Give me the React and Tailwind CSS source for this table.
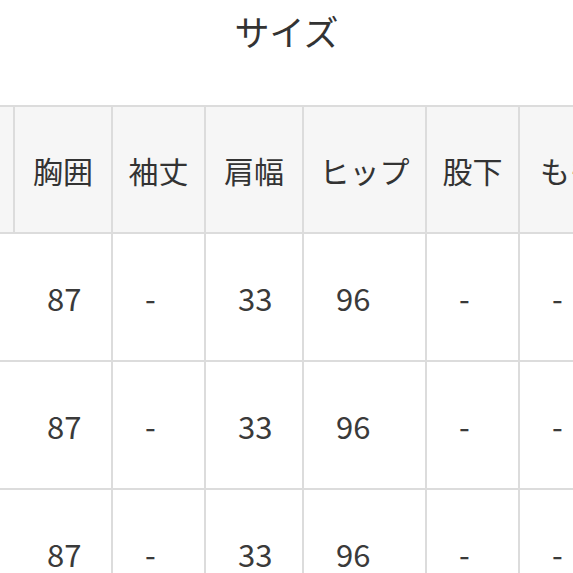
import React from "react";

const headers = ["", "胸囲", "袖丈", "肩幅", "ヒップ", "股下", "もも回り"];
const rows = [
  ["", "87", "-", "33", "96", "-", "-"],
  ["", "87", "-", "33", "96", "-", "-"],
  ["", "87", "-", "33", "96", "-", "-"],
];

export default function App() {
  return (
    <div className="w-[573px] h-[573px] overflow-hidden bg-white font-['Noto_Sans_CJK_JP',sans-serif] text-[#333]">
      <div className="h-[105px] pt-[13px] text-center text-[35px] leading-[35px]">サイズ</div>
      <div className="grid w-max grid-cols-[13px_96px_91px_96px_121px_91px_160px] gap-[2px] bg-[#dcdcdc] py-[2px]">
        {headers.map((h, i) => (
          <div
            key={"h" + i}
            className="h-[125px] bg-[#f6f6f6] flex items-center justify-center text-[30px] leading-none whitespace-nowrap overflow-hidden"
          >
            {h}
          </div>
        ))}
        {rows.map((r, ri) =>
          r.map((c, ci) => (
            <div
              key={ri + "-" + ci}
              className="h-[126px] bg-white flex items-center pl-[32px] text-[31px] leading-none whitespace-nowrap overflow-hidden text-[#3a3a3a]"
            >
              {c}
            </div>
          ))
        )}
      </div>
    </div>
  );
}
